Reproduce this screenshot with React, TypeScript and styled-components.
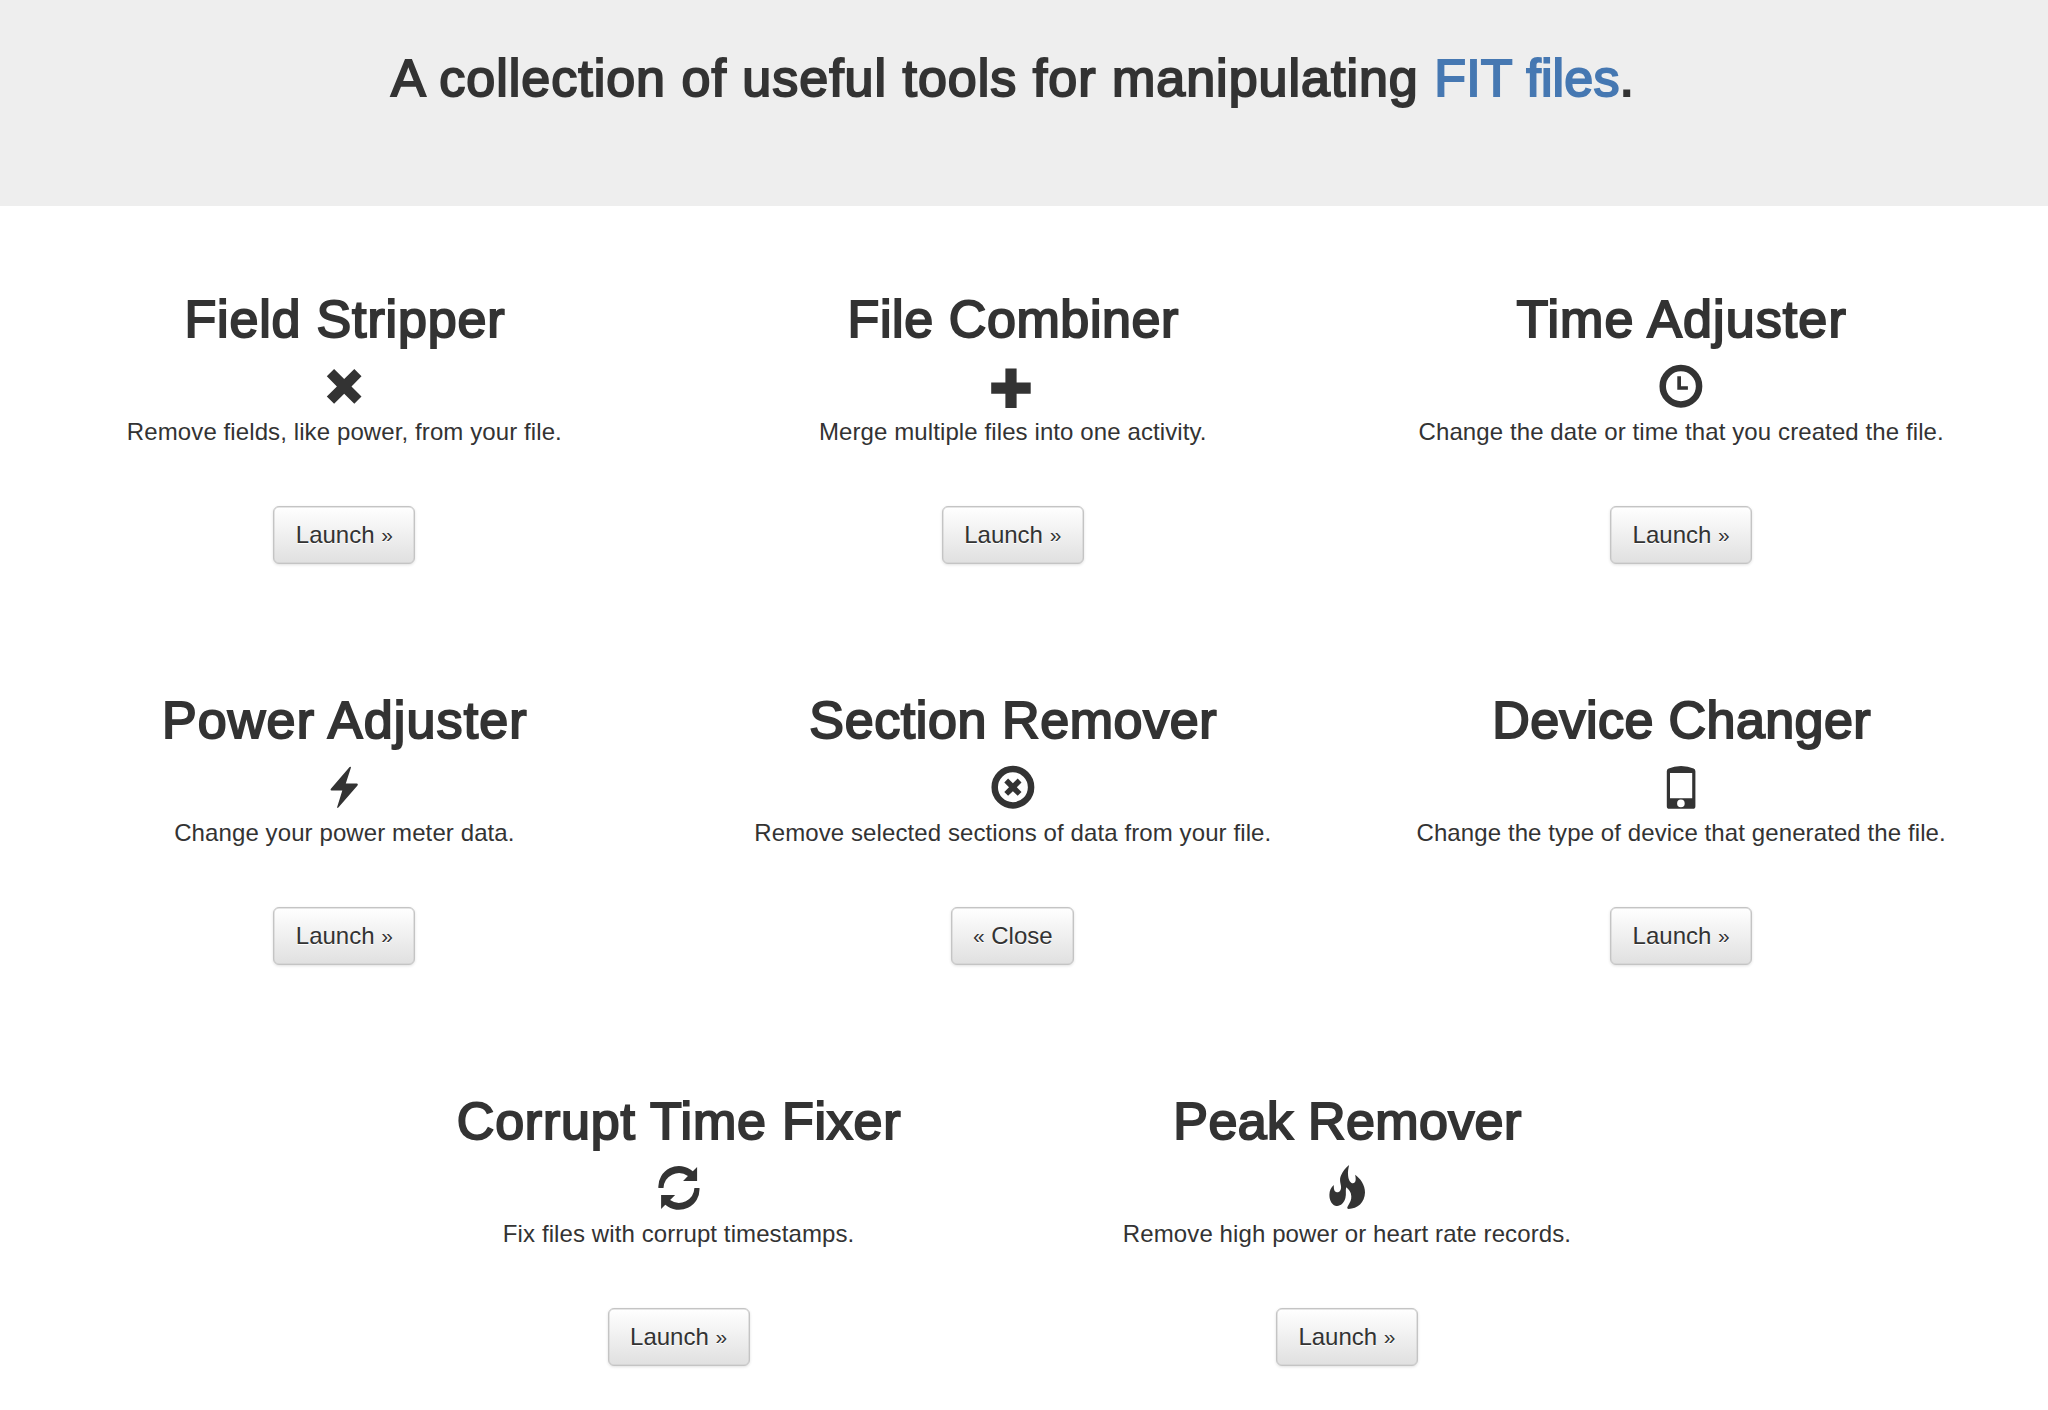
import type { ReactNode } from 'react';
import styled, { createGlobalStyle } from 'styled-components';

const icons: Record<string, ReactNode> = {
    remove: <path d="M12.1 9 22.2 19.1 32.3 9 39.5 16.3 29.5 26.4 39.5 36.5 32.3 43.7 22.2 33.7 12.1 43.7 4.8 36.5 14.9 26.4 4.8 16.3Z" />,
    plus: <path d="M14.4 8.4H25.6V22.6H39.7V33.8H25.6V48H14.4V33.8H0.2V22.6H14.4Z" />,
    time: (
        <>
            <circle cx="21.9" cy="26.2" r="18.2" fill="none" stroke="#333" strokeWidth="6.5" />
            <path d="M18.3 16.3H22V26.3H28.9V29.8H18.3Z" />
        </>
    ),
    flash: <path d="M27.6 6.1Q29.2 5 28.9 6.8L23.8 22.6H34.8Q36.6 22.8 35.5 24.4L16.4 46.6Q14.8 47.8 15.2 45.9L20.3 29.6H9.4Q7.8 29.4 8.9 27.8Z" />,
    removeCircle: (
        <>
            <circle cx="21.9" cy="26.2" r="18.2" fill="none" stroke="#333" strokeWidth="6.5" />
            <path d="M17.1 17.6 21.9 22.2 26.7 17.6 30.5 21.4 25.8 26.2 30.5 31 26.7 34.8 21.9 30.2 17.1 34.8 13.3 31 18 26.2 13.3 21.4Z" />
        </>
    ),
    phone: (
        <path
            fillRule="evenodd"
            d="M7.8 10.2Q7.8 8.4 9.6 7.6Q15 5 22.1 5Q29.2 5 34.6 7.6Q36.4 8.4 36.4 10.2V45.2Q36.4 47.8 33.8 47.8H10.4Q7.8 47.8 7.8 45.2ZM11 12V37.2H33.2V12ZM21.9 38.6A3.8 3.8 0 1 0 21.9 46.2A3.8 3.8 0 1 0 21.9 38.6Z"
        />
    ),
    refresh: (
        <g transform="translate(0.2 0)">
            <path d="M1.2 26A20.6 20.6 0 0 1 35.6 9.3L39.9 5V19H25.9L30.7 14A15.5 15.5 0 0 0 6.3 26Z" />
            <path d="M42.3 26A20.6 20.6 0 0 1 8.1 42.7L3.9 47V33.1H17.9L12.9 38A15.5 15.5 0 0 0 37.2 26Z" />
        </g>
    ),
    fire: (
        <path d="M24.1 3C23.2 7.6 22.7 9.7 23.1 13.4C23.5 17.9 25.6 21.3 27.9 21.3C30.9 21 31.2 17.3 30.1 12.7C35.1 16.1 40.1 22.8 40 30.6C39.7 40.8 32.7 46.7 23.4 47C21.7 46.4 22.2 45.3 22.9 43.9C25.2 40 26.5 37.6 26.3 34.2C26.1 30.2 23.9 27.2 21.2 25.3C20.3 28.5 21.5 32.1 20.4 36C19.1 40.9 15.7 44.1 11.7 43.9C7.2 43.7 4.3 38.6 4.4 32.7C4.5 28.8 5.9 25.4 8.8 23.1C8.7 26.8 9.2 30.3 12 30.3C15.2 30.3 16.6 27.4 15.9 23.5C15 19 14.5 16.9 16.1 13.3C17.7 9.4 20.5 6 24.1 3Z" />
    ),
};

const rows = [
    [
        { name: 'Field Stripper', icon: 'remove', spacing: 0.83, text: 'Remove fields, like power, from your file.' },
        { name: 'File Combiner', icon: 'plus', spacing: 0.6, text: 'Merge multiple files into one activity.' },
        { name: 'Time Adjuster', icon: 'time', spacing: 1.1, text: 'Change the date or time that you created the file.' },
    ],
    [
        { name: 'Power Adjuster', icon: 'flash', spacing: 1.15, text: 'Change your power meter data.' },
        { name: 'Section Remover', icon: 'removeCircle', spacing: 0.6, text: 'Remove selected sections of data from your file.', open: true },
        { name: 'Device Changer', icon: 'phone', spacing: 0.42, text: 'Change the type of device that generated the file.' },
    ],
    [
        { name: 'Corrupt Time Fixer', icon: 'refresh', spacing: 0.78, text: 'Fix files with corrupt timestamps.' },
        { name: 'Peak Remover', icon: 'fire', spacing: 0.36, text: 'Remove high power or heart rate records.' },
    ],
];

const App = () => {
    return (
        <Page>
            <GlobalStyle />
            <Jumbotron>
                <Tagline>
                    A collection of useful tools for manipulating <FitLink href="#">FIT files</FitLink>.
                </Tagline>
            </Jumbotron>
            <Tools>
                {rows.map((row, i) => (
                    <Row key={i}>
                        {row.map((tool) => (
                            <Tool key={tool.name}>
                                <ToolTitle $spacing={tool.spacing}>{tool.name}</ToolTitle>
                                <Icon viewBox="0 0 44 50">{icons[tool.icon]}</Icon>
                                <Description>{tool.text}</Description>
                                {'open' in tool ? (
                                    <LaunchButton $open><Arrow>«</Arrow> Close</LaunchButton>
                                ) : (
                                    <LaunchButton>Launch <Arrow>»</Arrow></LaunchButton>
                                )}
                            </Tool>
                        ))}
                    </Row>
                ))}
            </Tools>
        </Page>
    );
}

const GlobalStyle = createGlobalStyle`
  body {
    margin: 0;
    background-color: #fff;
    color: #333;
    font-family: "Liberation Sans", Arial, sans-serif;
  }
`

const Page = styled.div`
    width: 100%;
    height: 1410px;
    overflow: hidden;
`

const Jumbotron = styled.header`
    box-sizing: border-box;
    height: 206px;
    padding: 48px 22px 0 0;
    background-color: #eee;
    text-align: center;
`

const Tagline = styled.h1`
    margin: 0;
    font-size: 52px;
    font-weight: 400;
    line-height: 60px;
    letter-spacing: 1px;
    -webkit-text-stroke: 2px;
`

const FitLink = styled.a`
    color: #4678b2;
    letter-spacing: 0.15px;
    text-decoration: none;
`

const Tools = styled.main`
    width: 2005.2px;
    margin-left: 10.2px;
`

const Row = styled.div`
    display: flex;
    justify-content: center;
    height: 401px;
`

const Tool = styled.section`
    box-sizing: border-box;
    display: flex;
    flex-direction: column;
    align-items: center;
    width: 668.4px;
    padding-top: 83px;
`

const ToolTitle = styled.h2<{ $spacing: number }>`
    margin: 0 0 11px;
    padding-left: 1px;
    font-size: 52px;
    font-weight: 400;
    line-height: 60px;
    letter-spacing: ${({ $spacing }) => $spacing}px;
    white-space: nowrap;
    -webkit-text-stroke: 2px;
`

const Icon = styled.svg`
    width: 44px;
    height: 50px;
    fill: #333;
`

const Description = styled.p`
    margin: 5px 0 57px;
    font-size: 24px;
    line-height: 34px;
    letter-spacing: 0.1px;
    white-space: nowrap;
`

const LaunchButton = styled.button<{ $open?: boolean }>`
    box-sizing: border-box;
    width: ${({ $open }) => ($open ? '123px' : '142px')};
    height: 58px;
    padding: 0;
    border: 1px solid #c4c4c4;
    border-radius: 6px;
    background-image: linear-gradient(to bottom, #fff 0%, #e0e0e0 100%);
    box-shadow: inset 0 0 0 0.5px #ccc, 0 1px 3px rgba(0, 0, 0, 0.12);
    color: #333;
    font-family: inherit;
    font-size: 24px;
    line-height: 34px;
    text-shadow: 0 1px 0 #fff;
    white-space: nowrap;
`

const Arrow = styled.span`
    font-size: 21px;
    vertical-align: 1px;
`

export default App;
